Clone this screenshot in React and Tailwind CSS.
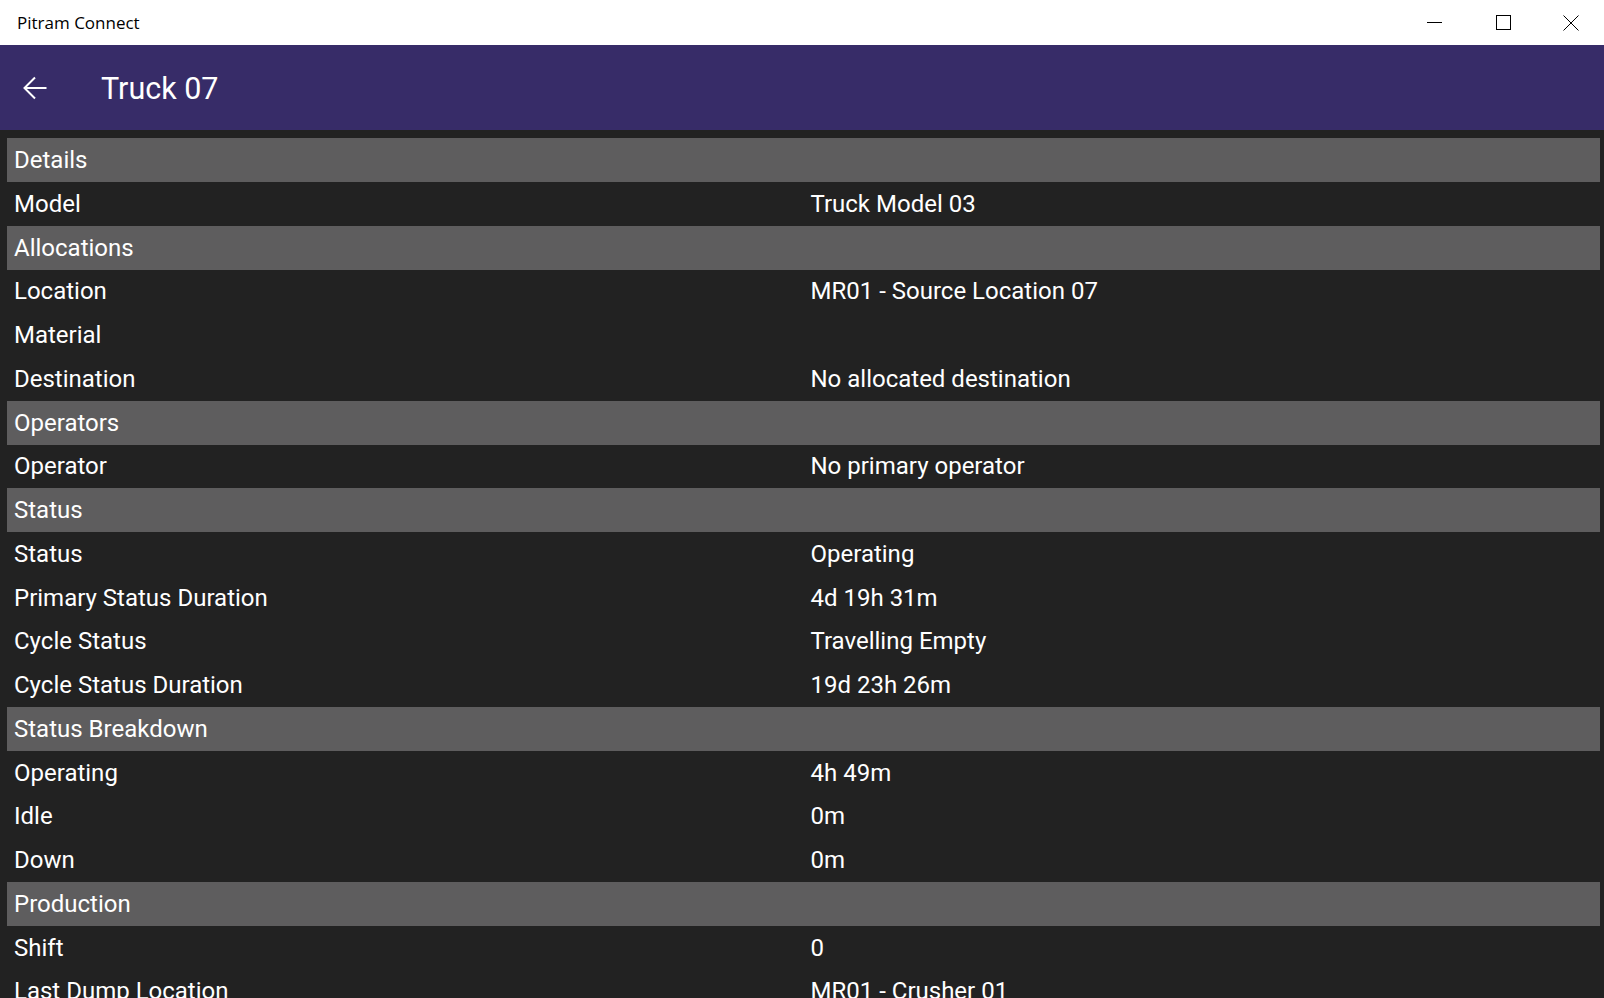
import React from "react";

const rows = [
  { h: "Details" },
  { l: "Model", v: "Truck Model 03" },
  { h: "Allocations" },
  { l: "Location", v: "MR01 - Source Location 07" },
  { l: "Material", v: "" },
  { l: "Destination", v: "No allocated destination" },
  { h: "Operators" },
  { l: "Operator", v: "No primary operator" },
  { h: "Status" },
  { l: "Status", v: "Operating" },
  { l: "Primary Status Duration", v: "4d 19h 31m" },
  { l: "Cycle Status", v: "Travelling Empty" },
  { l: "Cycle Status Duration", v: "19d 23h 26m" },
  { h: "Status Breakdown" },
  { l: "Operating", v: "4h 49m" },
  { l: "Idle", v: "0m" },
  { l: "Down", v: "0m" },
  { h: "Production" },
  { l: "Shift", v: "0" },
  { l: "Last Dump Location", v: "MR01 - Crusher 01" },
];

export default function App() {
  return (
    <div className="w-[1604px] h-[998px] overflow-hidden flex flex-col bg-[#222222]">
      <div className="h-[45px] shrink-0 bg-white flex items-center justify-between">
        <div className="pl-[17px] text-[17px] text-black" style={{ fontFamily: '"Open Sans", "Noto Sans", sans-serif' }}>
          Pitram Connect
        </div>
        <div className="flex items-center h-full">
          <div className="w-[69px] h-full flex items-center justify-center">
            <svg width="15" height="15" viewBox="0 0 15 15">
              <line x1="0" y1="7.5" x2="15" y2="7.5" stroke="#000" strokeWidth="1" />
            </svg>
          </div>
          <div className="w-[69px] h-full flex items-center justify-center">
            <svg width="15" height="15" viewBox="0 0 15 15">
              <rect x="0.5" y="0.5" width="14" height="14" fill="none" stroke="#000" strokeWidth="1" />
            </svg>
          </div>
          <div className="w-[66px] h-full flex items-center justify-center">
            <svg width="16" height="16" viewBox="0 0 16 16">
              <path d="M0.5 0.5 L15.5 15.5 M15.5 0.5 L0.5 15.5" stroke="#000" strokeWidth="1" fill="none" />
            </svg>
          </div>
        </div>
      </div>
      <div className="h-[85px] shrink-0 bg-[#372c68] flex items-center text-white" style={{ fontFamily: 'Roboto, sans-serif' }}>
        <div className="w-[101px] flex items-center pl-[23px]">
          <svg width="24" height="24" viewBox="0 0 24 24">
            <path d="M1.5 12 H23.5 M12 1.5 L1.5 12 L12 22.5" stroke="#fff" strokeWidth="2" fill="none" />
          </svg>
        </div>
        <div className="text-[30.5px] leading-none mt-[4px]">Truck 07</div>
      </div>
      <div className="flex-1 pt-[8.25px] pl-[7px] pr-[4px] text-white text-[24px]" style={{ fontFamily: 'Roboto, sans-serif' }}>
        {rows.map((r, i) =>
          r.h ? (
            <div key={i} className="h-[43.75px] bg-[#5e5d5e] flex items-center px-[7px]">
              {r.h}
            </div>
          ) : (
            <div key={i} className="h-[43.75px] grid grid-cols-2 items-center">
              <div className="px-[7px] whitespace-nowrap">{r.l}</div>
              <div className="px-[7px] whitespace-nowrap">{r.v}</div>
            </div>
          )
        )}
      </div>
    </div>
  );
}
